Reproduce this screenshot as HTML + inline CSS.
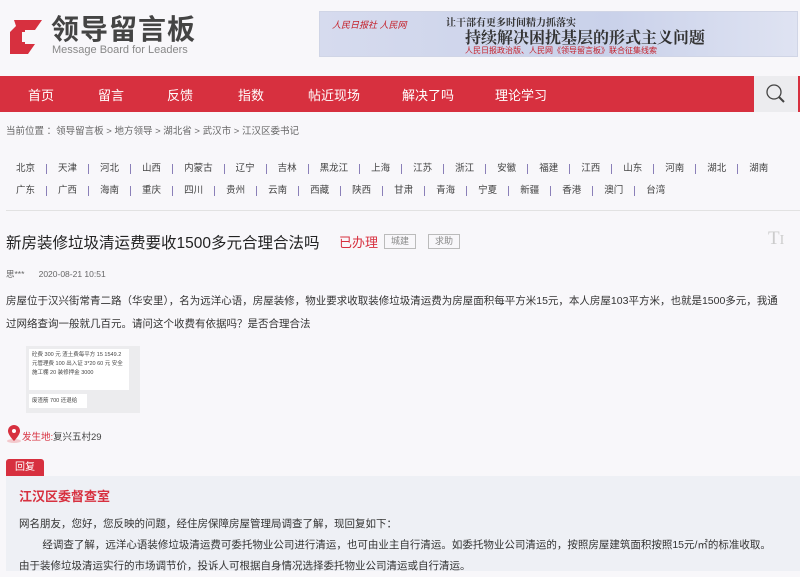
<!DOCTYPE html>
<html><head><meta charset="utf-8"><style>
*{margin:0;padding:0;box-sizing:border-box}
body{width:800px;height:571px;overflow:hidden;background:#f8f7fa;font-family:"Liberation Sans","Noto Sans CJK SC",sans-serif;color:#333;position:relative}
.a{position:absolute;white-space:nowrap}
.nav{position:absolute;left:0;top:76px;width:754px;height:36px;background:#d7303f}
.nav span{position:absolute;top:9px;color:#fff;font-size:13px}
.reg{position:absolute;left:6px;font-size:9.5px;color:#444}
.reg span{display:inline-block;padding:0 11px;border-right:1px solid #8a7fb8;line-height:10px}
.reg span:first-child{padding-left:10px}
.reg span:last-child{border:none}
</style></head><body>
<svg class="a" style="left:8px;top:18px" width="36" height="38" viewBox="0 0 36 38"><path d="M6 2h28l-7 10h-10v14h10l-7 10H2V14l6-6z" fill="#d7303f"/><path d="M14 14h10v10H14z" fill="#f8f7fa"/></svg>
<div class="a" style="left:51px;top:14px;font-size:28px;line-height:32px;font-weight:bold;color:#444;letter-spacing:1px">领导留言板</div>
<div class="a" style="left:52px;top:44px;font-size:11px;line-height:12px;color:#888">Message Board for Leaders</div>
<div class="a" style="left:319px;top:11px;width:479px;height:46px;background:linear-gradient(90deg,#d6dbee,#c9d1ea 60%,#dfe3f2);border:1px solid #d0d5e6">
<div class="a" style="left:12px;top:6px;font-size:9px;color:#c4202a;font-style:italic">人民日报社 人民网</div>
<div class="a" style="left:126px;top:2px;font-size:10px;color:#333;font-family:'Noto Serif CJK SC',serif;font-weight:bold">让干部有更多时间精力抓落实</div>
<div class="a" style="left:145px;top:13px;font-size:16px;color:#333;font-family:'Noto Serif CJK SC',serif;font-weight:bold">持续解决困扰基层的形式主义问题</div>
<div class="a" style="left:145px;top:33px;font-size:8px;color:#c4202a">人民日报政治版、人民网《领导留言板》联合征集线索</div>
</div>
<div class="nav"><span style="left:28px">首页</span><span style="left:98px">留言</span><span style="left:167px">反馈</span><span style="left:238px">指数</span><span style="left:308px">帖近现场</span><span style="left:402px">解决了吗</span><span style="left:495px">理论学习</span></div>
<div class="a" style="left:754px;top:76px;width:44px;height:36px;background:#ececef"><svg width="44" height="36"><circle cx="20" cy="16" r="7" stroke="#444" stroke-width="1.3" fill="none"/><path d="M25 21l5 5" stroke="#444" stroke-width="2"/></svg></div>
<div class="a" style="left:798px;top:76px;width:2px;height:36px;background:#d7303f"></div>
<div class="a" style="left:6px;top:123px;font-size:9.5px;color:#666">当前位置 ：领导留言板 &gt; 地方领导 &gt; 湖北省 &gt; 武汉市 &gt; 江汉区委书记</div>
<div class="reg" style="top:163px"><span>北京</span><span>天津</span><span>河北</span><span>山西</span><span>内蒙古</span><span>辽宁</span><span>吉林</span><span>黑龙江</span><span>上海</span><span>江苏</span><span>浙江</span><span>安徽</span><span>福建</span><span>江西</span><span>山东</span><span>河南</span><span>湖北</span><span>湖南</span></div>
<div class="reg" style="top:185px"><span>广东</span><span>广西</span><span>海南</span><span>重庆</span><span>四川</span><span>贵州</span><span>云南</span><span>西藏</span><span>陕西</span><span>甘肃</span><span>青海</span><span>宁夏</span><span>新疆</span><span>香港</span><span>澳门</span><span>台湾</span></div>
<div class="a" style="left:6px;top:210px;width:794px;height:1px;background:#e2e2e2"></div>
<div class="a" style="left:6px;top:231px;font-size:15.5px;color:#222">新房装修垃圾清运费要收1500多元合理合法吗</div>
<div class="a" style="left:339px;top:232px;font-size:13px;color:#d7303f">已办理</div>
<div class="a" style="left:384px;top:234px;width:32px;height:15px;border:1px solid #bbb;font-size:9px;color:#888;text-align:center;line-height:13px">城建</div>
<div class="a" style="left:428px;top:234px;width:32px;height:15px;border:1px solid #bbb;font-size:9px;color:#888;text-align:center;line-height:13px">求助</div>
<div class="a" style="left:768px;top:228px;font-size:19px;color:#ccc;font-family:'Liberation Serif',serif">T<span style="font-size:14px">I</span></div>
<div class="a" style="left:6px;top:268px;font-size:8.5px;color:#666">思***&nbsp;&nbsp;&nbsp;&nbsp;&nbsp;&nbsp;2020-08-21 10:51</div>
<div class="a" style="left:6px;top:290px;font-size:10.5px;color:#333;line-height:23px;white-space:normal;width:792px">房屋位于汉兴街常青二路（华安里），名为远洋心语，房屋装修，物业要求收取装修垃圾清运费为房屋面积每平方米15元，本人房屋103平方米，也就是1500多元，我通<br>过网络查询一般就几百元。请问这个收费有依据吗？是否合理合法</div>
<div class="a" style="left:26px;top:346px;width:114px;height:67px;background:#ececee">
<div class="a" style="left:3px;top:3px;width:100px;height:41px;background:#fff;font-size:5.5px;line-height:9px;padding:2px 3px;white-space:normal;color:#444">砼费 300 元 渣土费每平方 15 1549.2 元管理费 100 出入证 3*20 60 元 安全施工棚 20 装修押金 3000</div>
<div class="a" style="left:3px;top:48px;width:58px;height:14px;background:#fff;font-size:5.5px;line-height:14px;padding-left:3px;color:#444">废渣筋 700 还退给</div></div>
<svg class="a" style="left:6px;top:424px" width="18" height="20"><ellipse cx="8" cy="17" rx="7" ry="2" fill="#f3c9cd"/><path d="M8 1a6 6 0 0 1 6 6c0 4-6 10-6 10S2 11 2 7a6 6 0 0 1 6-6z" fill="#d7303f"/><circle cx="8" cy="7" r="2" fill="#fff"/></svg>
<div class="a" style="left:22px;top:429px;font-size:9.5px;color:#d7303f">发生地:</div>
<div class="a" style="left:53px;top:429px;font-size:9.5px;color:#444">复兴五村29</div>
<div class="a" style="left:6px;top:459px;width:38px;height:18px;background:#d7303f;border-radius:3px 3px 0 0;color:#fff;font-size:10px;line-height:18px;padding-left:9px">回复</div>
<div class="a" style="left:6px;top:476px;width:794px;height:95px;background:#eef0f5"></div>
<div class="a" style="left:19px;top:486px;font-size:13px;font-weight:bold;color:#d7303f">江汉区委督查室</div>
<div class="a" style="left:19px;top:514px;font-size:10.5px;color:#333;line-height:21px;white-space:normal;width:780px">网名朋友，您好，您反映的问题，经住房保障房屋管理局调查了解，现回复如下：<br>&nbsp;&nbsp;&nbsp;&nbsp;&nbsp;&nbsp;&nbsp;&nbsp;经调查了解，远洋心语装修垃圾清运费可委托物业公司进行清运，也可由业主自行清运。如委托物业公司清运的，按照房屋建筑面积按照15元/㎡的标准收取。<br>由于装修垃圾清运实行的市场调节价，投诉人可根据自身情况选择委托物业公司清运或自行清运。</div>
</body></html>
